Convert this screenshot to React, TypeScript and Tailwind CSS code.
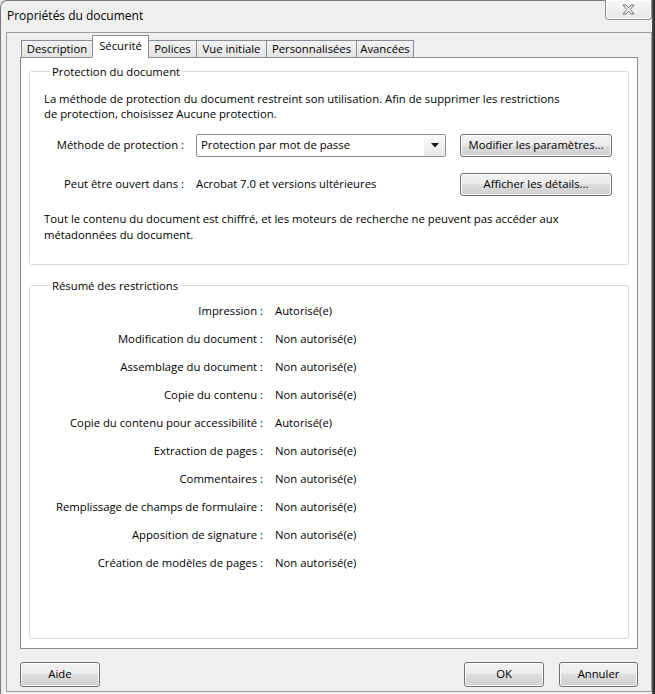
import React from "react";

function Btn({ className, children }: { className: string; children: React.ReactNode }) {
  return (
    <div
      className={
        "flex items-center justify-center whitespace-nowrap rounded-[3px] border border-[#707070] bg-[linear-gradient(#f2f2f2_0%,#ebebeb_50%,#dddddd_50%,#cfcfcf_100%)] shadow-[inset_0_0_0_1px_#fbfbfb] text-black " +
        className
      }
    >
      {children}
    </div>
  );
}

const tabs = [
  { label: "Description", w: "w-[72px]", sel: false },
  { label: "Sécurité", w: "w-[57px]", sel: true },
  { label: "Polices", w: "w-[49px]", sel: false },
  { label: "Vue initiale", w: "w-[71px]", sel: false },
  { label: "Personnalisées", w: "w-[91px]", sel: false },
  { label: "Avancées", w: "w-[58px]", sel: false },
];

const rows: [string, string][] = [
  ["Impression :", "Autorisé(e)"],
  ["Modification du document :", "Non autorisé(e)"],
  ["Assemblage du document :", "Non autorisé(e)"],
  ["Copie du contenu :", "Non autorisé(e)"],
  ["Copie du contenu pour accessibilité :", "Autorisé(e)"],
  ["Extraction de pages :", "Non autorisé(e)"],
  ["Commentaires :", "Non autorisé(e)"],
  ["Remplissage de champs de formulaire :", "Non autorisé(e)"],
  ["Apposition de signature :", "Non autorisé(e)"],
  ["Création de modèles de pages :", "Non autorisé(e)"],
];

export default function App() {
  return (
    <div className="flex w-[655px] h-[694px] overflow-hidden bg-[#e9e9e9] font-['Segoe_UI','Open_Sans',sans-serif] text-[11.3px] text-black">
      {/* window */}
      <div className="flex flex-col w-[652px] h-[694px] border-l border-t border-[#7a7a7a] rounded-tl-[7px] bg-[#efefef]">
        {/* title bar */}
        <div className="flex h-[31px] justify-between">
          <div className="pl-[6px] pt-[6px] text-[12px] leading-[17px] whitespace-nowrap">Propriétés du document</div>
          <div className="flex items-center justify-center w-[47px] h-[20px] -mt-px border border-t-0 border-[#8c8c8c] rounded-b-[4px] bg-[linear-gradient(#f7f7f7,#e6e6e6)] shadow-[inset_0_0_0_1px_#ffffff]">
            <svg width="13" height="11" viewBox="0 0 13 11">
              <path
                d="M1 1 H4 L6.5 3.8 L9 1 H12 L8.2 5.5 L12 10 H9 L6.5 7.2 L4 10 H1 L4.8 5.5 Z"
                fill="#ffffff"
                stroke="#6f6f6f"
                strokeWidth="1"
                strokeLinejoin="round"
              />
            </svg>
          </div>
        </div>
        {/* client area */}
        <div className="flex flex-col ml-[5px] h-[660px] border border-[#9d9d9d] pl-[13px] pr-[13px]">
          {/* tabs */}
          <div className="flex items-end h-[25px] pt-[2px] -mb-px relative z-10 pl-px">
            {tabs.map((t, i) =>
              t.sel ? (
                <div
                  key={t.label}
                  className={`${t.w} ${i > 0 ? "-ml-px" : ""} h-[23px] flex justify-center pt-[2px] leading-[15px] whitespace-nowrap bg-white border border-[#898c95] border-b-white`}
                >
                  {t.label}
                </div>
              ) : (
                <div
                  key={t.label}
                  className={`${t.w} ${i > 0 ? "-ml-px" : ""} h-[18px] flex items-center justify-center leading-[14px] whitespace-nowrap bg-[linear-gradient(#f2f2f2,#e3e3e3)] border border-[#898c95]`}
                >
                  {t.label}
                </div>
              )
            )}
          </div>
          {/* panel */}
          <div className="flex flex-col w-[618px] h-[592px] border border-[#898c95] bg-white px-[8px] pt-[6px] pb-[9px]">
            <fieldset className="h-[201px] border border-[#d6dbe0] rounded-[3px] pl-[14px]">
              <legend className="ml-[6px] px-[2px] leading-[15px] whitespace-nowrap">Protection du document</legend>
              <div className="pt-[12px] leading-[15px] whitespace-nowrap">
                La méthode de protection du document restreint son utilisation. Afin de supprimer les restrictions
                <br />
                de protection, choisissez Aucune protection.
              </div>
              <div className="flex items-center h-[23px] mt-[13px] whitespace-nowrap">
                <div className="w-[140px] text-right">Méthode de protection :</div>
                <div className="ml-[12px] w-[250px] h-[23px] flex border border-[#8e8f8f] rounded-[2px] bg-white">
                  <div className="flex-1 flex items-center pl-[4px]">Protection par mot de passe</div>
                  <div className="w-[21px] flex items-center justify-center bg-[linear-gradient(#fafafa,#e8e8e8)]">
                    <svg width="8" height="5" viewBox="0 0 8 5">
                      <path d="M0 0 H8 L4 4.5 Z" fill="#1a1a1a" />
                    </svg>
                  </div>
                </div>
                <Btn className="ml-[14px] w-[152px] h-[23px]">Modifier les paramètres...</Btn>
              </div>
              <div className="flex items-center h-[23px] mt-[16px] whitespace-nowrap">
                <div className="w-[140px] text-right">Peut être ouvert dans :</div>
                <div className="ml-[12px] w-[250px]">Acrobat 7.0 et versions ultérieures</div>
                <Btn className="ml-[14px] w-[152px] h-[23px]">Afficher les détails...</Btn>
              </div>
              <div className="mt-[15px] leading-[16px] whitespace-nowrap">
                Tout le contenu du document est chiffré, et les moteurs de recherche ne peuvent pas accéder aux
                <br />
                métadonnées du document.
              </div>
            </fieldset>
            <fieldset className="flex-1 mt-[13px] border border-[#d6dbe0] rounded-[3px] pl-[14px]">
              <legend className="ml-[6px] px-[2px] leading-[15px] whitespace-nowrap">Résumé des restrictions</legend>
              <div className="pt-[4px] flex flex-col">
                {rows.map(([l, v]) => (
                  <div key={l} className="flex items-center h-[28px] whitespace-nowrap">
                    <div className="w-[219px] text-right">{l}</div>
                    <div className="ml-[12px]">{v}</div>
                  </div>
                ))}
              </div>
            </fieldset>
          </div>
          {/* bottom buttons */}
          <div className="flex justify-between mt-[13px] w-[618px]">
            <Btn className="w-[80px] h-[25px]">Aide</Btn>
            <div className="flex gap-[15px]">
              <Btn className="w-[80px] h-[25px]">OK</Btn>
              <Btn className="w-[79px] h-[25px]">Annuler</Btn>
            </div>
          </div>
        </div>
      </div>
      <div className="w-[3px] h-[694px] bg-[linear-gradient(90deg,#5a5a5a,#1e1e1e)]" />
    </div>
  );
}
